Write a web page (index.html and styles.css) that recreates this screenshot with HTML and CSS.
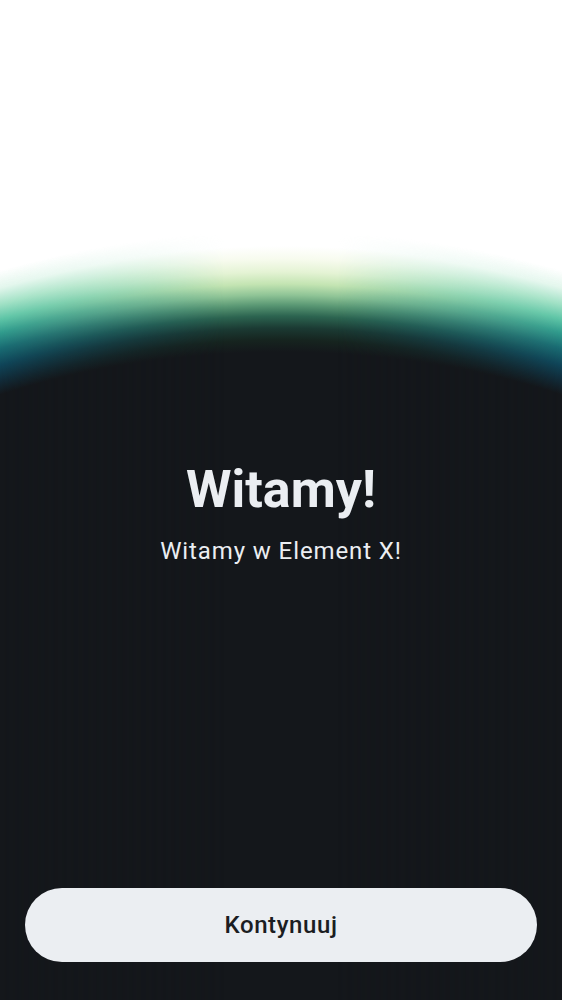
FILE: index.html
```html
<!DOCTYPE html>
<html lang="pl">
<head>
<meta charset="utf-8">
<title>Witamy</title>
<link rel="stylesheet" href="styles.css">
</head>
<body>
<main class="screen">
  <section class="intro">
    <h1 class="title">Witamy!</h1>
    <p class="subtitle">Witamy w Element X!</p>
  </section>
  <div class="actions">
    <button class="btn-primary" type="button">Kontynuuj</button>
  </div>
</main>
</body>
</html>
```
FILE: styles.css
```css
html, body {
  margin: 0;
  padding: 0;
}
body {
  background: #14171b;
  font-family: Roboto, "Noto Sans", "Liberation Sans", sans-serif;
}
.screen {
  position: relative;
  width: 562px;
  height: 1000px;
  overflow: hidden;
  display: flex;
  flex-direction: column;
  background: radial-gradient(circle at 281px 1250px,
    #14171b 898px,
    #16241f 910px,
    #1b3a33 922px,
    #2c6450 934px,
    #5a9874 945px,
    #8fc496 955px,
    #c3e4b2 966px,
    #e4f3d4 978px,
    #f7fbee 991px,
    #ffffff 1004px);
}
.screen::before {
  content: "";
  position: absolute;
  inset: 0;
  background: radial-gradient(circle at 281px 1250px,
    #14171b 900px,
    #112c3a 914px,
    #0f4458 928px,
    #186a72 944px,
    #2f9a8c 959px,
    #5cc4a6 972px,
    #9ee0c4 986px,
    #e2f6ec 1002px,
    rgba(255,255,255,0) 1019px);
  -webkit-mask-image: linear-gradient(to right, #000 0%, rgba(0,0,0,0) 40%, rgba(0,0,0,0) 60%, #000 100%);
  mask-image: linear-gradient(to right, #000 0%, rgba(0,0,0,0) 40%, rgba(0,0,0,0) 60%, #000 100%);
  pointer-events: none;
}
.intro {
  position: relative;
  padding-top: 458px;
  text-align: center;
  color: #ebeef2;
  flex: 1;
}
.title {
  margin: 0;
  font-size: 52px;
  font-weight: 700;
  line-height: 64px;
}
.subtitle {
  margin: 14px 0 0;
  font-size: 24px;
  font-weight: 400;
  line-height: 30px;
  letter-spacing: 0.9px;
}
.actions {
  position: relative;
  padding: 0 25px 38px;
}
.btn-primary {
  display: block;
  width: 100%;
  height: 74px;
  border: none;
  border-radius: 37px;
  background: #ebeef2;
  color: #1b1d22;
  font-family: Roboto, "Noto Sans", "Liberation Sans", sans-serif;
  font-size: 24px;
  font-weight: 500;
  letter-spacing: 0.6px;
  cursor: pointer;
}
```
